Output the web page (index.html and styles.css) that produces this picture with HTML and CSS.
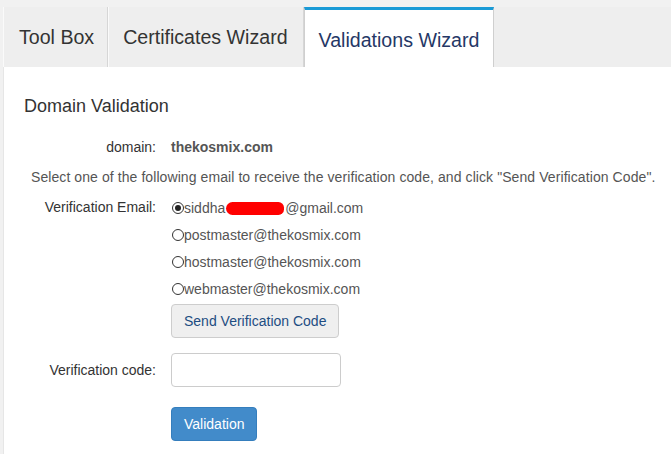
FILE: index.html
```html
<!DOCTYPE html>
<html>
<head>
<meta charset="utf-8">
<link rel="stylesheet" href="styles.css">
</head>
<body>
<div class="page">
  <div class="tabs">
    <div class="tab tab-first">Tool Box</div>
    <div class="tab">Certificates Wizard</div>
    <div class="tab tab-active">Validations Wizard</div>
  </div>
  <div class="content">
    <h3 class="title">Domain Validation</h3>
    <div class="row row-domain">
      <div class="label">domain:</div>
      <div class="value">thekosmix.com</div>
    </div>
    <p class="hint">Select one of the following email to receive the verification code, and click "Send Verification Code".</p>
    <div class="row row-email">
      <div class="label label-email">Verification Email:</div>
      <div class="controls">
        <div class="radio"><span class="dot dot-on"></span>siddha<span class="redact"></span>@gmail.com</div>
        <div class="radio"><span class="dot"></span>postmaster@thekosmix.com</div>
        <div class="radio"><span class="dot"></span>hostmaster@thekosmix.com</div>
        <div class="radio"><span class="dot"></span>webmaster@thekosmix.com</div>
        <div><button class="btn btn-default">Send Verification Code</button></div>
      </div>
    </div>
    <div class="row row-code">
      <div class="label">Verification code:</div>
      <div class="controls"><input class="input" type="text"></div>
    </div>
    <div class="row row-submit">
      <div class="label"></div>
      <div class="controls"><button class="btn btn-primary">Validation</button></div>
    </div>
  </div>
</div>
</body>
</html>
```

FILE: styles.css
```css
html, body {
  margin: 0;
  padding: 0;
}
body {
  background: #f1f1f1;
  font-family: "Liberation Sans", Arial, sans-serif;
  font-size: 14px;
  color: #333;
  width: 671px;
  height: 454px;
  overflow: hidden;
}
.page {
  padding-top: 7px;
  padding-left: 3px;
}
.tabs {
  display: flex;
  height: 60px;
  background: #eeeeee;
  border-left: 1px solid #fafafa;
}
.tab {
  height: 60px;
  box-sizing: border-box;
  padding: 0 15px 0 15px;
  display: flex;
  align-items: center;
  font-size: 19.6px;
  color: #333;
  border-right: 1px solid #d6d6d6;
  box-shadow: 1px 0 0 #fafafa;
}
.tab-first {
  padding: 0 13px 0 15px;
}
.tab-active {
  background: #fff;
  border-top: 3px solid #1a9ad6;
  border-left: 1px solid #cfcfcf;
  border-right: 1px solid #cfcfcf;
  padding: 3px 14px 0 14px;
  color: #253766;
  box-shadow: none;
  margin-left: 0;
}
.content {
  background: #fff;
  border-left: 1px solid #e6e6e6;
  height: 400px;
  padding: 0 20px;
}
.title {
  margin: 0;
  padding-top: 29px;
  font-size: 18px;
  font-weight: normal;
  line-height: 20px;
  color: #333;
}
.row {
  display: grid;
  grid-template-columns: 132px 1fr;
  column-gap: 15px;
}
.label {
  text-align: right;
  line-height: 20px;
  color: #333;
}
.row-domain {
  margin-top: 21px;
  line-height: 20px;
}
.value {
  font-weight: bold;
  color: #555;
}
.hint {
  margin: 10px 0 0 7px;
  line-height: 20px;
  color: #555;
  white-space: nowrap;
  letter-spacing: 0.08px;
}
.row-email {
  margin-top: 8px;
}
.label-email {
  line-height: 24px;
}
.radio {
  height: 27px;
  line-height: 27px;
  color: #555;
  display: flex;
  align-items: center;
}
.dot {
  width: 12px;
  height: 12px;
  border: 1px solid #333;
  border-radius: 50%;
  box-sizing: border-box;
  margin-left: 1px;
  margin-right: 0;
  display: flex;
  align-items: center;
  justify-content: center;
  position: relative;
  top: -1px;
}
.dot-on::after {
  content: "";
  width: 6px;
  height: 6px;
  border-radius: 50%;
  background: #222;
}
.redact {
  display: inline-block;
  width: 58px;
  height: 13px;
  background: #ff0000;
  border-radius: 7px 6px 6px 7px;
  margin-left: 1px;
  margin-right: 1px;
}
.btn {
  font-family: "Liberation Sans", Arial, sans-serif;
  font-size: 14px;
  height: 34px;
  padding: 0 12px;
  border-radius: 4px;
  border: 1px solid #ccc;
  box-sizing: border-box;
  margin-top: 1px;
}
.btn-default {
  background: #efefef;
  color: #1e4d82;
  border-color: #cdcdcd;
}
.btn-primary {
  background: #428bca;
  border-color: #357ebd;
  color: #fff;
}
.row-code {
  margin-top: 15px;
  align-items: center;
}
.input {
  width: 170px;
  height: 34px;
  box-sizing: border-box;
  border: 1px solid #ccc;
  border-radius: 4px;
  padding: 6px 12px;
  display: block;
}
.row-submit {
  margin-top: 19px;
}
```
